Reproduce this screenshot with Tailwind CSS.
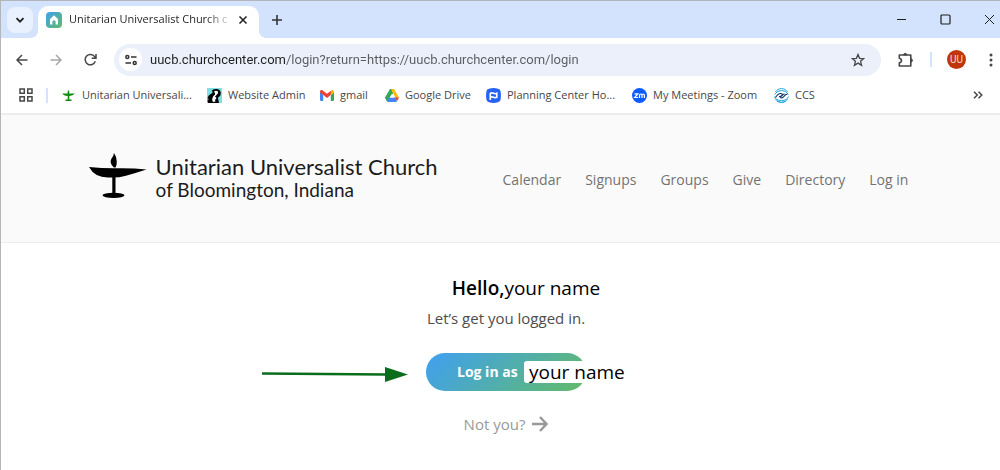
<!DOCTYPE html>
<html lang="en">
<head>
<meta charset="utf-8">
<title>Unitarian Universalist Church of Bloomington</title>
<script src="https://cdn.jsdelivr.net/npm/@tailwindcss/browser@4"></script>
</head>
<body class="min-h-screen border-l border-t border-[#b3b5ba] bg-white font-['Open_Sans',sans-serif] text-[#474747]">

<!-- Tab strip -->
<div class="flex h-[37px] items-stretch bg-[#d3e3fd]">
  <div class="flex w-[37px] shrink-0 items-center bg-[#d3e3fd] pl-[6px]">
    <button aria-label="Search tabs" class="flex size-[26px] items-center justify-center rounded-lg bg-[#e9f1fe]">
      <svg class="size-[10px]" viewBox="0 0 10 10" fill="none" stroke="#1f1f1f" stroke-width="1.8"><path d="M1.5 3.2 5 6.7l3.5-3.5"/></svg>
    </button>
  </div>
  <div class="relative mt-[5px] flex w-[221px] shrink-0 items-center rounded-t-[10px] bg-white pb-[5px] pl-[8px]">
    <span class="absolute -left-2 bottom-0 size-2 bg-[radial-gradient(circle_at_0_0,transparent_8px,white_8px)]"></span>
    <span class="absolute -right-2 bottom-0 size-2 bg-[radial-gradient(circle_at_100%_0,transparent_8px,white_8px)]"></span>
    <svg class="size-4 shrink-0" viewBox="0 0 16 16"><defs><linearGradient id="home" x1="0" y1="0" x2="1" y2="1"><stop offset="0" stop-color="#3fa0f0"/><stop offset="1" stop-color="#62bb68"/></linearGradient></defs><rect width="16" height="16" rx="4" fill="url(#home)"/><path d="M8 3.2 12 7v5.6H9.6V9.8a1.6 1.6 0 0 0-3.2 0v2.8H4V7z" fill="#fff"/></svg>
    <span class="ml-[7px] w-[158px] whitespace-nowrap text-[11px] text-[#1f1f1f] [mask-image:linear-gradient(to_right,black_138px,transparent_164px)]">Unitarian Universalist Church of</span>
    <button aria-label="Close tab" class="ml-[8px] flex size-4 items-center justify-center"><svg class="size-[10px]" viewBox="0 0 10 10" stroke="#1f1f1f" stroke-width="1.5"><path d="m1.5 1.5 7 7m0-7-7 7"/></svg></button>
  </div>
  <button aria-label="New tab" class="ml-[10px] flex w-4 items-center justify-center"><svg class="size-[10px]" viewBox="0 0 10 10" stroke="#333" stroke-width="1.6"><path d="M0 5h10M5 0v10"/></svg></button>
  <div class="ml-auto flex items-center gap-[33px] pr-[5px]">
    <button aria-label="Minimize"><svg class="size-[11px]" viewBox="0 0 11 11" stroke="#1f1f1f"><path d="M1 5.5h9"/></svg></button>
    <button aria-label="Maximize"><svg class="size-[11px]" viewBox="0 0 11 11" fill="none" stroke="#1f1f1f" stroke-width="1.2"><rect x="1" y="1" width="9" height="9" rx="1"/></svg></button>
    <button aria-label="Close"><svg class="size-[11px]" viewBox="0 0 11 11" stroke="#1f1f1f"><path d="m1 1 9 9m0-9-9 9"/></svg></button>
  </div>
</div>

<!-- Toolbar -->
<div class="flex h-[43px] items-center pr-[3px] font-[Roboto,sans-serif]">
  <div class="flex w-[113px] shrink-0 items-center gap-[22px] pl-[15px]">
    <button aria-label="Back"><svg class="size-3" viewBox="0 0 12 12" fill="none" stroke="#474747" stroke-width="1.5"><path d="M11.5 6H1M6 1 1 6l5 5"/></svg></button>
    <button aria-label="Forward"><svg class="size-3" viewBox="0 0 12 12" fill="none" stroke="#a6a6a6" stroke-width="1.5"><path d="M.5 6H11M6 1l5 5-5 5"/></svg></button>
    <button aria-label="Reload"><svg class="size-[13px]" viewBox="0 0 13 13" fill="none" stroke="#474747" stroke-width="1.5"><path d="M11.3 8.3a5.2 5.2 0 1 1-.6-4.6L11.8 5M12 1v4.3H7.7"/></svg></button>
  </div>
  <form class="flex h-8 flex-1 items-center rounded-full bg-[#ecf0fa] pr-4 pl-[5px]">
    <button type="button" aria-label="Site information" class="flex size-[23px] shrink-0 items-center justify-center rounded-full bg-white">
      <svg class="size-3" viewBox="0 0 12 12" fill="none" stroke="#333" stroke-width="1.5"><circle cx="2.3" cy="3" r="1.5"/><path d="M6 3h5.5M.5 9H6"/><circle cx="9.7" cy="9" r="1.5"/></svg>
    </button>
    <!-- The host is darker than the rest of the address -->
    <input aria-label="Address" class="ml-2 h-5 min-w-0 flex-1 bg-[linear-gradient(to_right,#1f1f1f_136px,#5a5c61_136px)] bg-clip-text text-[13px] text-transparent outline-none" value="uucb.churchcenter.com/login?return=https://uucb.churchcenter.com/login">
    <button type="button" aria-label="Bookmark this page"><svg class="size-[14px]" viewBox="0 0 14 14" fill="none" stroke="#474747" stroke-width="1.3"><path d="m7 1.500 1.600 3.800 4.100.3-3.100 2.700 1 4L7 10.100l-3.600 2.200 1-4L1.300 5.600l4.100-.3z"/></svg></button>
  </form>
  <button aria-label="Extensions" class="ml-[17px]"><svg class="size-4" viewBox="0 0 16 16" fill="none" stroke="#474747" stroke-width="1.6" stroke-linejoin="round"><path d="M1.300 3h11.500v11H1.300v-3.200c2.900-.4 2.900-4 0-4.500z"/><path d="M5.500 3a1.700 1.700 0 0 1 3.400 0zM12.800 6.700a1.700 1.700 0 0 1 0 3.400z" fill="#474747" stroke-width=".8"/></svg></button>
  <span class="ml-4 h-[15px] w-[2px] bg-[#d3e3fd]"></span>
  <button aria-label="Profile" class="ml-[15px] flex size-[19px] items-center justify-center rounded-full bg-[#bf360c] text-[10px] text-[#f5ddd5]">UU</button>
  <button aria-label="Menu" class="ml-[19px] flex w-3 justify-center"><svg class="h-[14px] w-1" viewBox="0 0 4 14" fill="#474747"><circle cx="2" cy="2" r="1.500"/><circle cx="2" cy="7" r="1.500"/><circle cx="2" cy="12" r="1.500"/></svg></button>
</div>

<!-- Bookmarks -->
<nav aria-label="Bookmarks" class="flex h-[34px] items-center border-b-2 border-[#ededed] pb-1 text-[11px] whitespace-nowrap">
  <button aria-label="Apps" class="ml-[18px] shrink-0"><svg class="size-[14px]" viewBox="0 0 14 14" fill="none" stroke="#474747" stroke-width="1.500"><path d="M1 1h4.300v4.300H1zM8.700 1H13v4.300H8.700zM1 8.700h4.300V13H1zM8.700 8.700H13V13H8.700z"/></svg></button>
  <span class="ml-[13px] h-[15px] w-[2px] bg-[#d3e3fd]"></span>
  <a href="#" class="ml-[13px] flex w-[146px] shrink-0 items-center gap-[6px]"><svg class="size-[15px]" viewBox="0 0 15 15" fill="#118a11"><path d="M1.300 5.500h5.300Q6.300 3 7.500 2q1.200 1 .7 3.500h5.600q-1.600 2.400-5.500 2.500v3.500h2.200V13H4.500v-1.500h2.200V8Q2.500 7.800 1.300 5.500z"/></svg>Unitarian Universali...</a>
  <a href="#" class="flex w-[113px] shrink-0 items-center gap-[6px]"><svg class="size-[15px]" viewBox="0 0 15 15"><path fill="#7ee0e4" d="M0 0h15v15H0z"/><path fill="#050505" d="M4.500 3Q6 .5 10 1q3.500.5 3.800 4 .2 2-1.300 3.500Q11 9 11 10l1 5H1l-.5-3L2 11l-1.500-.5Q1 7 4.500 5.500L6 4z"/><path fill="#fff" d="M7 3.500Q9 2 11 3.500q.5 2-1.500 3.500L8 8.500 9.500 10 8 12l.5 1.500L6 14q-1.500-2-.5-4Q6 8 7.500 7 9 6 7 3.500z"/></svg>Website Admin</a>
  <a href="#" class="flex w-[65px] shrink-0 items-center gap-[6px]"><svg class="h-[11px] w-[14px]" viewBox="0 0 14 11"><path fill="#4285f4" d="M0 1.500v8.300c0 .7.500 1.200 1.200 1.200h2V5z"/><path fill="#34a853" d="M14 1.500v8.300c0 .7-.5 1.200-1.200 1.200h-2V5z"/><path fill="#ea4335" d="M0 2C0 .2 1.500-.3 2.700.4L7 3.700 11.300.4v4.200L7 8 2.700 4.600 0 2.700z"/><path fill="#fbbc04" d="m10.800.8.500-.4C12.500-.5 14 .2 14 2v.7l-3.200 2.500z"/></svg>gmail</a>
  <a href="#" class="flex w-[101px] shrink-0 items-center gap-[6px]"><svg class="h-[13px] w-[14px]" viewBox="0 0 14 13"><path fill="#34a853" d="M5 0h2l1 4.500-5.500 7L0 8.500z"/><path fill="#fbbc04" d="M6 0h3l5 8.500-3.500.5z"/><path fill="#ea4335" d="M9.500 8.500H14l-2 3.700z"/><path fill="#4285f4" d="M0 8.500h10l2 3.700c-.3.500-.700.8-1.200.8H3.200c-.5 0-.900-.3-1.200-.8z"/><path fill="#34a853" d="M0 8.500h4.300L2 12.200z"/><path fill="#fff" d="m7 4.700 2.300 3.900H4.700z"/></svg>Google Drive</a>
  <a href="#" class="flex w-[146px] shrink-0 items-center gap-[6px]"><svg class="size-[15px]" viewBox="0 0 15 15"><path fill="#2563f5" d="M3 .8Q7.500-.6 12 .8q2.300.4 2.600 2.600.6 4.100 0 8.200-.3 2.200-2.600 2.600-4.500 1.400-9 0Q.700 13.800.4 11.600q-.6-4.100 0-8.200Q.700 1.200 3 .8z"/><path fill="none" stroke="#fff" stroke-width="1.600" d="M4.300 12V5M4.300 5.300q1.500-.8 3.200 0t3.300 0v4q-1.700.7-3.300 0-1.700-.8-3.200 0"/></svg>Planning Center Ho...</a>
  <a href="#" class="flex w-[142px] shrink-0 items-center gap-[6px]"><svg class="size-[15px]" viewBox="0 0 15 15"><circle cx="7.500" cy="7.500" r="7.500" fill="#0b5cff"/><path d="M2.500 5.800h3.300L2.700 9.500h3.500M7.500 10V7.300q0-1.300 1.200-1.300T10 7.300V10m0-2.700Q10 6 11.200 6t1.200 1.300V10" fill="none" stroke="#fff" stroke-width="1.200"/></svg>My Meetings - Zoom</a>
  <a href="#" class="flex items-center gap-[6px]"><svg class="size-[15px]" viewBox="0 0 15 15" fill="none" stroke="#1fa5de" stroke-width="1"><path d="M1.500 4A7 7 0 0 1 13.500 4M.600 6.500Q3 2.500 7.500 2.500T14.400 6.500M1.500 11a7 7 0 0 0 12 0M.600 8.500q1 4 6.900 4t6.900-4M3 13.200q4 2.300 8.500.3"/><path stroke="#12356e" stroke-width="1.200" d="M1.500 9.500Q4 5.500 6.500 5.500q1.300 0 2 .8M6 9.500q2.300 1 4-1.200 1.200-2 3.500-2.300M5 8.500q1.500.5 3-1 1.200-1.200 2.500-1.700"/></svg>CCS</a>
  <button aria-label="More bookmarks" class="mr-[17px] ml-auto"><svg class="h-2 w-[10px]" viewBox="0 0 10 8" fill="none" stroke="#474747" stroke-width="1.500"><path d="m1 .7 3.300 3.300L1 7.300M5.500.7 8.800 4 5.500 7.300"/></svg></button>
</nav>

<!-- Site header -->
<header class="flex h-32 items-center justify-center gap-[65px] border-b border-[#ececec] bg-[#fafafa] pr-1 pb-[6px]">
  <a href="#" class="flex items-center gap-[9px] text-[#1c1c1c]">
    <svg class="h-12 w-[58px]" viewBox="0 0 58 48" fill="#000"><path d="M0 15q14 1.500 29 1.300T57.500 17.500Q47 21 36 24q-7 2-16 1.500Q6 26 0 15z"/><path d="M24.800 15.500Q20 11 22.500 6.500 24.500 4.500 25 1q3 4 2.800 9 0 3-1.200 5.500zM23.300 24h3.200v18h-3.200z"/><ellipse cx="24.500" cy="43.300" rx="11" ry="2.600"/></svg>
    <span class="flex flex-col pt-1 font-[Lato,sans-serif] whitespace-nowrap"><span class="text-[22px] leading-6">Unitarian Universalist Church</span><span class="text-[19px] leading-[22px]">of Bloomington, Indiana</span></span>
  </a>
  <nav aria-label="Main" class="flex gap-6 pt-[9px] text-sm whitespace-nowrap text-[#737373]">
    <a href="#">Calendar</a><a href="#">Signups</a><a href="#">Groups</a><a href="#">Give</a><a href="#">Directory</a><a href="#">Log in</a>
  </nav>
</header>

<main class="flex flex-col items-center pt-[31px] pl-[11px]">
  <h1 class="flex items-baseline pl-10 text-[19px] leading-7 whitespace-nowrap text-black"><span class="font-semibold">Hello,</span><span>your name</span></h1>
  <p class="mt-[6px] text-[15px] leading-5 text-[#4d4d4d]">Let’s get you logged in.</p>
  <div class="relative mt-[25px]">
    <svg class="absolute top-3 -left-[164px] h-[18px] w-[146px]" viewBox="0 0 146 18"><path d="m0 8.500 124 1" stroke="#0a6d1c" stroke-width="2.500"/><path d="M123 2v15l23-7.500z" fill="#0a6d1c"/></svg>
    <button class="flex h-[38px] w-40 items-center rounded-full bg-[linear-gradient(135deg,#3fa0f2,#62bb68)] pl-[31px] text-sm font-bold text-white">Log in as</button>
    <span class="absolute top-2 left-[98px] rounded-[3px] bg-white pr-1 pl-[5px] text-[19px] leading-[22px] whitespace-nowrap text-black">your name</span>
  </div>
  <a href="#" class="mt-[23px] flex items-center gap-[7px] text-[15px] leading-5 text-[#999]">Not you?<svg class="size-4" viewBox="0 0 16 16" fill="none" stroke="#999" stroke-width="2.400"><path d="M0 8h14M8 1l6.500 7L8 15"/></svg></a>
</main>
</body>
</html>
